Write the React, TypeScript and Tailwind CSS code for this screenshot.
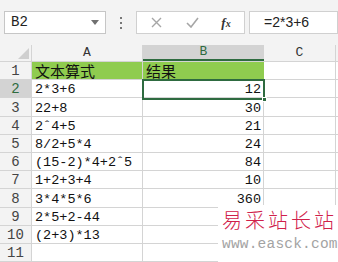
import React from "react";

const rows: [string, string][] = [
  ["2*3+6", "12"],
  ["22+8", "30"],
  ["2ˆ4+5", "21"],
  ["8/2+5*4", "24"],
  ["(15-2)*4+2ˆ5", "84"],
  ["1+2+3+4", "10"],
  ["3*4*5*6", "360"],
  ["2*5+2-44", ""],
  ["(2+3)*13", ""],
  ["", ""],
];

const mono = { fontFamily: '"Liberation Mono", "Noto Sans CJK SC", monospace' };
const cjk = { fontFamily: '"Noto Sans CJK SC", "Liberation Sans", sans-serif' };

export default function App() {
  return (
    <div className="relative w-[338px] h-[262px] overflow-hidden bg-white">
      {/* toolbar */}
      <div className="h-[45px] bg-[#f3f3f3] flex items-start pt-[11px] pl-[4px]">
        <div className="w-[102px] h-[23px] bg-white border border-[#c6c6c6] flex items-center justify-between pl-[6px] pr-[6px]">
          <span className="text-[14px] text-[#222]" style={mono}>B2</span>
          <svg width="8" height="5" viewBox="0 0 8 5"><path d="M0 0 L8 0 L4 5 Z" fill="#707070" /></svg>
        </div>
        <div className="w-[30px] h-[23px] flex flex-col items-center justify-center gap-[3px]">
          <span className="w-[2px] h-[2px] bg-[#777]" />
          <span className="w-[2px] h-[2px] bg-[#777]" />
          <span className="w-[2px] h-[2px] bg-[#777]" />
        </div>
        <div className="w-[109px] h-[23px] bg-white border border-[#d0d0d0] flex items-center">
          <div className="w-[38px] flex justify-center">
            <svg width="11" height="11" viewBox="0 0 11 11"><path d="M1 1 L10 10 M10 1 L1 10" stroke="#a6a6a6" strokeWidth="1.4" /></svg>
          </div>
          <div className="w-[34px] flex justify-center">
            <svg width="13" height="11" viewBox="0 0 13 11"><path d="M1 6 L5 10 L12 1" stroke="#a6a6a6" strokeWidth="1.6" fill="none" /></svg>
          </div>
          <div className="w-[34px] flex justify-center">
            <span className="text-[13px] italic font-bold text-[#333]" style={{ fontFamily: '"Liberation Serif", serif' }}>f<span className="text-[10px]">x</span></span>
          </div>
        </div>
        <div className="ml-[4px] flex-1 h-[23px] bg-white border border-[#d0d0d0] flex items-center pl-[14px]">
          <span className="text-[14px] text-[#222]" style={{ fontFamily: '"Liberation Sans", sans-serif' }}>=2*3+6</span>
        </div>
      </div>

      {/* header row */}
      <div className="flex h-[17px] bg-[#f3f3f3] border-b border-[#d4d4d4]">
        <div className="w-[32px] border-r border-[#d4d4d4] relative">
          <svg className="absolute right-[2px] bottom-[2px]" width="11" height="11" viewBox="0 0 11 11"><path d="M11 0 L11 11 L0 11 Z" fill="#cfcfcf" /></svg>
        </div>
        <div className="w-[111px] border-r border-[#d4d4d4] flex items-end justify-center text-[13px] leading-[16px] text-[#333]" style={mono}>A</div>
        <div className="w-[121px] bg-[#d3d3d3] border-b-2 border-[#2e6b40] flex items-end justify-center text-[13px] leading-[15px] text-[#2e6b40]" style={mono}>B</div>
        <div className="w-[72px] border-r border-[#d4d4d4] flex items-end justify-center text-[13px] leading-[16px] text-[#333]" style={mono}>C</div>
        <div className="flex-1" />
      </div>

      {/* row 1 */}
      <Row n={1} sel={false}>
        <div className="w-[111px] h-full bg-[#8fcc4f] border-r border-[#d4d4d4] border-b border-b-[#d4d4d4] flex items-end pl-[3px] text-[15px] leading-[17px] text-[#111]" style={cjk}>文本算式</div>
        <div className="w-[121px] h-full bg-[#8fcc4f] border-b border-[#d4d4d4] flex items-end pl-[3px] text-[15px] leading-[17px] text-[#111]" style={cjk}>结果</div>
      </Row>
      {rows.map((r, i) => (
        <Row key={i} n={i + 2} sel={i === 0}>
          <div className="w-[111px] h-full border-r border-b border-[#d4d4d4] flex items-end pl-[3px] text-[13.5px] leading-[14px] text-[#111] whitespace-pre" style={mono}>{r[0]}</div>
          <div className="w-[121px] h-full border-r border-b border-[#d4d4d4] flex items-end justify-end pr-[2px] text-[13.5px] leading-[14px] text-[#111]" style={mono}>{r[1]}</div>
        </Row>
      ))}

      {/* selection */}
      <div className="absolute left-[142px] top-[79px] w-[123px] h-[21px] border-2 border-[#2e6b40]" />
      <div className="absolute left-[262px] top-[97px] w-[5px] h-[5px] bg-[#2e6b40] border border-white" />

      {/* watermark */}
      <div className="absolute left-[218px] top-[205px] w-[120px] h-[57px] bg-white pl-[4px] pt-[2px]">
        <div className="text-[20px] leading-[26px] tracking-[3px] font-light text-[#d0204a]" style={{ fontFamily: '"Noto Sans CJK SC", serif' }}>易采站长站</div>
        <div className="text-[14.5px] leading-[22px] text-[#a3a3a3] tracking-[0.2px]" style={mono}>www.easck.com</div>
      </div>
    </div>
  );
}

function Row({ n, sel, children }: { n: number; sel: boolean; children: React.ReactNode }) {
  return (
    <div className="flex h-[18.2px]">
      <div
        className={
          "w-[32px] h-full border-r border-b border-[#d4d4d4] flex items-end justify-center text-[14px] leading-[15px] " +
          (sel ? "bg-[#d3d3d3] text-[#2e6b40]" : "bg-[#f3f3f3] text-[#444]")
        }
        style={mono}
      >
        {n}
      </div>
      {children}
      <div className="w-[72px] h-full border-r border-b border-[#d4d4d4]" />
      <div className="flex-1 h-full border-b border-[#d4d4d4]" />
    </div>
  );
}
